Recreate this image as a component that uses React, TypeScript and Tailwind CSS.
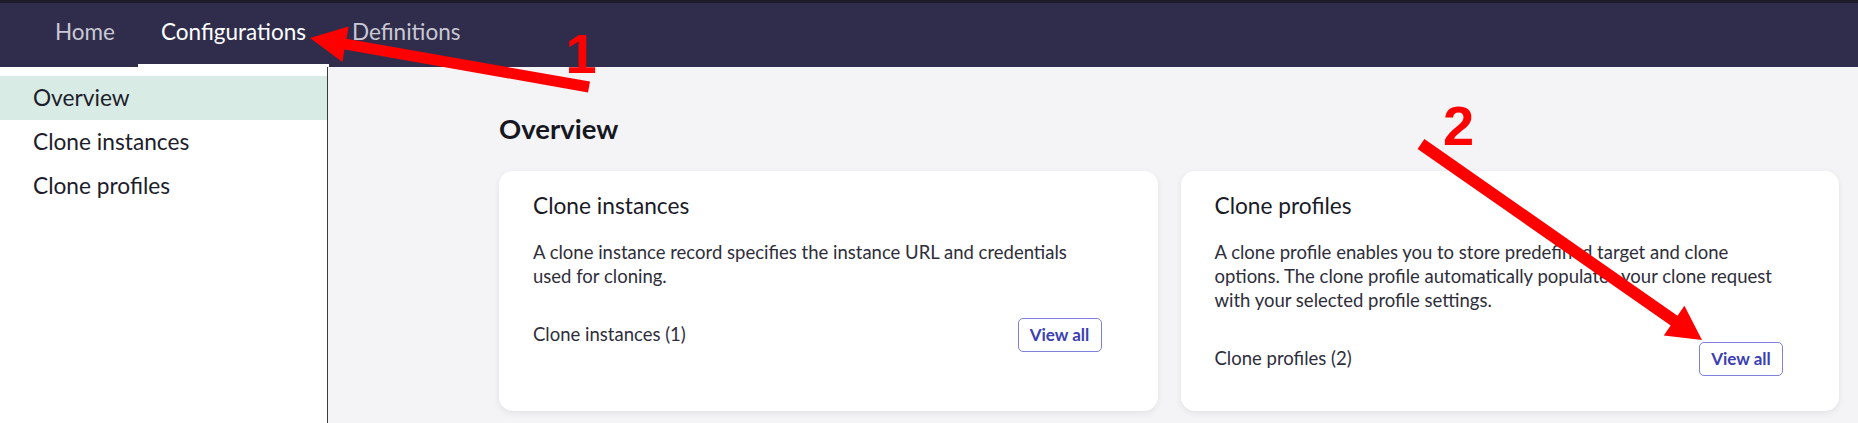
import React from 'react';

const tabs = ['Home', 'Configurations', 'Definitions'];
const sideItems = ['Overview', 'Clone instances', 'Clone profiles'];

const cards = [
  {
    title: 'Clone instances',
    text: 'A clone instance record specifies the instance URL and credentials used for cloning.',
    count: 'Clone instances (1)',
  },
  {
    title: 'Clone profiles',
    text: 'A clone profile enables you to store predefined target and clone options. The clone profile automatically populates your clone request with your selected profile settings.',
    count: 'Clone profiles (2)',
  },
];

const Annotations = () => (
  <svg
    width={1858}
    height={423}
    viewBox="0 0 1858 423"
    className="absolute left-0 top-0 pointer-events-none"
  >
    <polygon
      fill="#ff0000"
      points="310,38 348.6,26.5 346.5,38.8 590,81.6 588,92.4 344.5,49.6 342.4,61.9"
    />
    <polygon
      fill="#ff0000"
      points="1702,340 1684.4,305.8 1677.5,315.7 1424.4,139.1 1417.6,148.9 1670.7,325.5 1663.8,335.4"
    />
    <text x={581} y={73} fill="#ff0000" fontSize={56} fontWeight={700} textAnchor="middle" fontFamily="'Liberation Sans', Arial, sans-serif">
      1
    </text>
    <text x={1458.5} y={145} fill="#ff0000" fontSize={56} fontWeight={700} textAnchor="middle" fontFamily="'Liberation Sans', Arial, sans-serif">
      2
    </text>
  </svg>
);

export default function App() {
  return (
    <div className="relative w-[1858px] h-[423px] overflow-hidden flex flex-col font-['Lato','Noto_Sans',sans-serif]">
      <nav className="h-[67px] shrink-0 bg-[#2f2d4b] border-t-[3px] border-[#1d1b2a] flex pl-[32px]">
        {tabs.map((t, i) => (
          <div
            key={t}
            className={
              i === 1
                ? 'h-full px-[23px] flex items-center text-[22.5px] text-white border-b-[3px] border-white pb-[3px]'
                : 'h-full px-[23px] flex items-center text-[22.5px] text-[#c9c8d4] pb-[6px]'
            }
          >
            {t}
          </div>
        ))}
      </nav>

      <div className="flex flex-1 min-h-0">
        <aside className="w-[328px] shrink-0 bg-white border-r border-[#3a3a3a] pt-[9px]">
          {sideItems.map((s, i) => (
            <div
              key={s}
              className={
                'h-[44px] pl-[33px] flex items-center text-[22.7px] text-[#1d1d2b] ' +
                (i === 0 ? 'bg-[#d8ebe5]' : '')
              }
            >
              {s}
            </div>
          ))}
        </aside>

        <main className="flex-1 bg-[#f4f4f7] pl-[171px] pr-[19px] pt-[44px]">
          <h1 className="text-[27.5px] leading-[36px] font-bold text-[#17171f] mb-[24px]">Overview</h1>
          <div className="grid grid-cols-2 gap-[23px]">
            {cards.map((c) => (
              <div
                key={c.title}
                className="bg-white rounded-[14px] shadow-[0_2px_6px_rgba(0,0,0,0.08)] pl-[34px] pr-[56px] pt-[20px] pb-[35px] flex flex-col"
              >
                <h2 className="text-[22.7px] leading-[30px] text-[#1b1b28]">{c.title}</h2>
                <p className="mt-[19px] text-[18.5px] leading-[24px] text-[#2e2e3b]">{c.text}</p>
                <div className="mt-[30px] flex items-center justify-between">
                  <span className="text-[18.5px] text-[#2e2e3b]">{c.count}</span>
                  <button className="h-[34px] w-[84px] rounded-[5px] border border-[#7d80dd] bg-white text-[17px] font-bold text-[#3b3fb3]">
                    View all
                  </button>
                </div>
              </div>
            ))}
          </div>
        </main>
      </div>

      <Annotations />
    </div>
  );
}
